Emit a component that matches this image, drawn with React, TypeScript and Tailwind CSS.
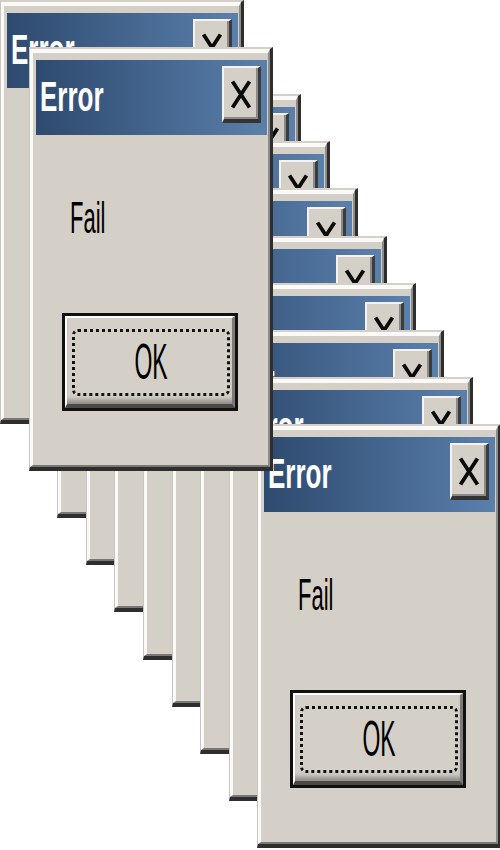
import React from "react";

function CloseButton() {
  return (
    <div className="mt-[6px] self-start w-[39px] h-[57px] bg-[#d4d0c8] border-t-2 border-l-2 border-t-[#f4f3f0] border-l-[#f4f3f0] border-r-[3px] border-b-[4px] border-r-[#3c3c3c] border-b-[#333333] flex items-center justify-center">
      <div className="w-full h-full flex items-center justify-center shadow-[inset_-2px_-2px_0_#8a8a8a]">
        <svg width="22" height="29" viewBox="0 0 22 29" className="mt-[1px]">
          <path d="M2.5 1.5 L19.5 27.5 M19.5 1.5 L2.5 27.5" stroke="#0a0a0a" strokeWidth="3.8" strokeLinecap="butt" fill="none" />
        </svg>
      </div>
    </div>
  );
}

function Dialog({ left, top, z }: { left: number; top: number; z: number }) {
  return (
    <div
      className="absolute w-[244px] h-[424px] flex flex-col bg-[#d4d0c8] border-t-2 border-l border-t-[#d4d0c8] border-l-[#c9c6bf] border-r-[3px] border-b-4 border-r-[#2e2e2e] border-b-[#2e2e2e]"
      style={{ left, top, zIndex: z }}
    >
      <div className="flex-1 flex flex-col border-t-4 border-l-[3px] border-t-[#fbfaf8] border-l-[#fbfaf8] border-r-2 border-b-2 border-r-[#8e8c88] border-b-[#7a7874] pt-[7px] pl-[3px] pr-px">
        <div className="h-[75px] flex justify-between bg-linear-to-r from-[#2e4a6f] to-[#5a80ac] pl-1 pr-[6px]">
          <span className="block self-center mb-[4px] text-[26px] leading-none font-bold text-white scale-y-[1.62] font-['Liberation_Sans',Arial,sans-serif]">
            Error
          </span>
          <CloseButton />
        </div>
        <span className="block self-start ml-[34px] mt-[73px] text-[22px] leading-none text-black scale-y-[2] font-['Liberation_Sans',Arial,sans-serif]">
          Fail
        </span>
        <div className="ml-[26px] mt-[83px] w-[176px] h-[98px] border-[3px] border-[#111111] flex">
          <div className="flex-1 flex border-t-2 border-l-2 border-t-white border-l-white border-r-[3px] border-b-4 border-r-[#7c7a76] border-b-[#4a4946] shadow-[inset_0_-7px_5px_-3px_#8d8b87] pt-[11px] pl-[5px] pr-[2px] pb-[8px]">
            <div className="flex-1 flex items-center justify-center border-[3px] border-dotted border-[#111111] rounded-[6px]">
              <span className="block text-[23px] leading-none text-black scale-y-[2.15] font-['Liberation_Sans',Arial,sans-serif]">
                OK
              </span>
            </div>
          </div>
        </div>
      </div>
    </div>
  );
}

export default function App() {
  const dialogs = Array.from({ length: 10 }, (_, k) => ({
    left: Math.round(28.6 * k),
    top: Math.round(47.1 * k),
    z: k === 1 ? 50 : k + 1,
  }));
  return (
    <div className="relative w-[500px] h-[850px] bg-white overflow-hidden">
      {dialogs.map((d, i) => (
        <Dialog key={i} left={d.left} top={d.top} z={d.z} />
      ))}
    </div>
  );
}
